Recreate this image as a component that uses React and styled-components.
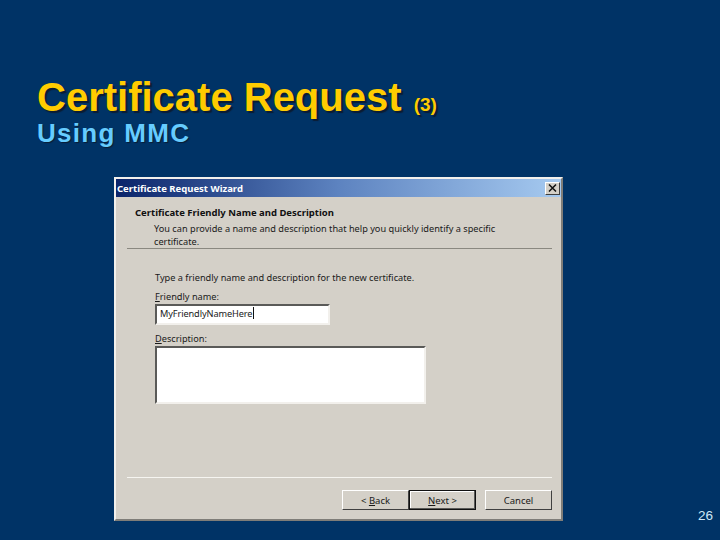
import React from "react";
import styled, { createGlobalStyle } from "styled-components";

const GlobalStyle = createGlobalStyle`
  html, body {
    margin: 0;
    padding: 0;
    background: #003366;
  }
`;

const Slide = styled.div`
  width: 720px;
  height: 540px;
  box-sizing: border-box;
  background: #003366;
  padding: 75px 7px 19px 37px;
  display: flex;
  flex-direction: column;
  font-family: "Liberation Sans", Arial, sans-serif;
  overflow: hidden;
`;

const Title = styled.h1`
  margin: 0;
  font-size: 40px;
  line-height: 44px;
  font-weight: 700;
  color: #ffcc00;
  text-shadow: 2px 2px 1px #0b1c33;
  white-space: nowrap;
`;

const TitleNote = styled.span`
  font-size: 19px;
  line-height: 0;
  margin-left: 1px;
`;

const Subtitle = styled.h2`
  margin: 0;
  font-size: 26px;
  line-height: 28px;
  font-weight: 700;
  letter-spacing: 1.3px;
  color: #66ccff;
  text-shadow: 1px 1px 1px #0b1c33;
`;

const Body = styled.div`
  margin-top: 30px;
  padding-left: 77px;
  flex: 1;
  display: flex;
  align-items: flex-end;
  justify-content: space-between;
`;

const PageNumber = styled.span`
  font-size: 13.5px;
  line-height: 14px;
  color: #cfe8f7;
  margin-bottom: -2px;
`;

const Dialog = styled.div`
  width: 449px;
  height: 344px;
  box-sizing: border-box;
  background: #d4d0c8;
  border: 2px solid;
  border-color: #f2f0ec #7f7d78 #7f7d78 #f2f0ec;
  display: flex;
  flex-direction: column;
  font-family: "Noto Sans", Tahoma, sans-serif;
  font-size: 9.2px;
  color: #1a1a1a;
`;

const TitleBar = styled.div`
  height: 18px;
  flex: none;
  background: linear-gradient(90deg, #0a246a 0%, #5d83c0 50%, #a6caf0 100%);
  display: flex;
  align-items: center;
  justify-content: space-between;
  padding: 0 1px 0 1px;
`;

const TitleText = styled.span`
  color: #fff;
  font-weight: 700;
  font-size: 9.5px;
`;

const CloseButton = styled.button`
  width: 15px;
  height: 13px;
  padding: 0;
  background: #d4d0c8;
  border: 1px solid;
  border-color: #fff #404040 #404040 #fff;
  display: flex;
  align-items: center;
  justify-content: center;
`;

const Header = styled.div`
  padding: 9px 0 0 19px;
  margin-right: 9px;
`;

const HeaderTitle = styled.div`
  font-weight: 700;
  font-size: 9.5px;
  line-height: 14px;
  color: #111;
`;

const HeaderText = styled.div`
  padding-left: 19px;
  margin-top: 2px;
  line-height: 13px;
  width: 345px;
`;

const Rule = styled.div`
  margin: 0 9px 0 11px;
  height: 1px;
  background: ${(p) => p.$color};
`;

const Content = styled.div`
  flex: 1;
  padding: 22px 0 0 39px;
  display: flex;
  flex-direction: column;
`;

const Intro = styled.div`
  line-height: 13px;
  margin-bottom: 6px;
`;

const FieldLabel = styled.label`
  display: block;
  line-height: 13px;
  margin-bottom: 1px;
  u {
    text-underline-offset: 1px;
  }
`;

const Field = styled.div`
  width: ${(p) => p.$width}px;
  height: ${(p) => p.$height}px;
  box-sizing: border-box;
  background: #fff;
  border: 2px solid;
  border-color: #5a5a58 #f2f0ec #f2f0ec #5a5a58;
  margin-bottom: ${(p) => p.$gap}px;
  padding: 1px 0 0 3px;
  line-height: 13px;
  letter-spacing: -0.1px;
`;

const Caret = styled.span`
  display: inline-block;
  width: 1px;
  height: 12px;
  background: #111;
  vertical-align: -2px;
  margin-left: 1px;
`;

const Footer = styled.div`
  display: flex;
  justify-content: flex-end;
  padding: 12px 9px 9px 0;
`;

const Button = styled.button`
  width: 67px;
  height: 20px;
  box-sizing: border-box;
  padding: 0;
  margin-left: ${(p) => p.$gap || 0}px;
  font: inherit;
  font-size: 9.5px;
  color: #1a1a1a;
  background: #d4d0c8;
  border: 1px solid;
  border-color: ${(p) => (p.$main ? "#111" : "#fff #404040 #404040 #fff")};
  box-shadow: ${(p) => (p.$main ? "inset -1px -1px 0 #5a5a58, inset 1px 1px 0 #fff" : "none")};
`;

const CloseIcon = () => (
  <svg width="9" height="8" viewBox="0 0 9 8">
    <path d="M1 0.5 L8 7.5 M8 0.5 L1 7.5" stroke="#111" strokeWidth="1.5" fill="none" />
  </svg>
);

export default function App() {
  return (
    <>
      <GlobalStyle />
      <Slide>
        <Title>
          Certificate Request <TitleNote>(3)</TitleNote>
        </Title>
        <Subtitle>Using MMC</Subtitle>
        <Body>
          <Dialog>
            <TitleBar>
              <TitleText>Certificate Request Wizard</TitleText>
              <CloseButton>
                <CloseIcon />
              </CloseButton>
            </TitleBar>
            <Header>
              <HeaderTitle>Certificate Friendly Name and Description</HeaderTitle>
              <HeaderText>
                You can provide a name and description that help you quickly identify a specific
                certificate.
              </HeaderText>
            </Header>
            <Rule $color="#8a8880" />
            <Content>
              <Intro>Type a friendly name and description for the new certificate.</Intro>
              <FieldLabel>
                <u>F</u>riendly name:
              </FieldLabel>
              <Field $width={175} $height={21} $gap={7}>
                MyFriendlyNameHere
                <Caret />
              </Field>
              <FieldLabel>
                <u>D</u>escription:
              </FieldLabel>
              <Field $width={271} $height={58} $gap={0} />
            </Content>
            <Rule $color="#f6f5f1" />
            <Footer>
              <Button>
                &lt; <u>B</u>ack
              </Button>
              <Button $main>
                <u>N</u>ext &gt;
              </Button>
              <Button $gap={9}>Cancel</Button>
            </Footer>
          </Dialog>
          <PageNumber>26</PageNumber>
        </Body>
      </Slide>
    </>
  );
}
